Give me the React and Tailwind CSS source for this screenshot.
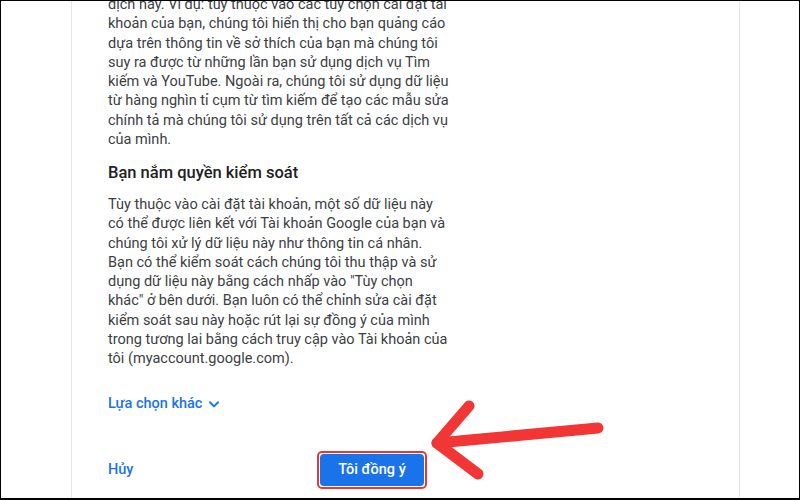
import React from 'react';

const para1 = [
  'dịch này. Ví dụ: tùy thuộc vào các tùy chọn cài đặt tài',
  'khoản của bạn, chúng tôi hiển thị cho bạn quảng cáo',
  'dựa trên thông tin về sở thích của bạn mà chúng tôi',
  'suy ra được từ những lần bạn sử dụng dịch vụ Tìm',
  'kiếm và YouTube. Ngoài ra, chúng tôi sử dụng dữ liệu',
  'từ hàng nghìn tỉ cụm từ tìm kiếm để tạo các mẫu sửa',
  'chính tả mà chúng tôi sử dụng trên tất cả các dịch vụ',
  'của mình.',
];

const para2 = [
  'Tùy thuộc vào cài đặt tài khoản, một số dữ liệu này',
  'có thể được liên kết với Tài khoản Google của bạn và',
  'chúng tôi xử lý dữ liệu này như thông tin cá nhân.',
  'Bạn có thể kiểm soát cách chúng tôi thu thập và sử',
  'dụng dữ liệu này bằng cách nhấp vào "Tùy chọn',
  'khác" ở bên dưới. Bạn luôn có thể chỉnh sửa cài đặt',
  'kiểm soát sau này hoặc rút lại sự đồng ý của mình',
  'trong tương lai bằng cách truy cập vào Tài khoản của',
  'tôi (myaccount.google.com).',
];

const App = () => {
  return (
    <div
      className="relative w-[800px] h-[500px] bg-white border border-b-2 border-black overflow-hidden flex"
      style={{ fontFamily: 'Roboto, "Liberation Sans", sans-serif' }}
    >
      <div className="w-[70px] shrink-0" />
      <div className="w-[669px] shrink-0 border-x border-[#e6e6e6] overflow-hidden pl-[36px] flex flex-col">
        <div className="-mt-[6px] text-[14.5px] leading-[19.25px] text-[#3c4043]">
          {para1.map((l) => (
            <div key={l} className="whitespace-nowrap">{l}</div>
          ))}
        </div>
        <h2 className="mt-[13px] text-[16.5px] leading-[22px] font-medium text-[#202124]">
          Bạn nắm quyền kiểm soát
        </h2>
        <div className="mt-[11px] text-[14.5px] leading-[19.25px] text-[#3c4043]">
          {para2.map((l) => (
            <div key={l} className="whitespace-nowrap">{l}</div>
          ))}
        </div>
        <button className="mt-[26px] self-start flex items-center gap-[5px] text-[14.5px] leading-[20px] font-medium text-[#1a73e8]">
          Lựa chọn khác
          <svg width="14" height="14" viewBox="0 0 24 24" fill="none" stroke="#1a73e8" strokeWidth="3.2" strokeLinecap="round" strokeLinejoin="round">
            <path d="M5 9l7 7 7-7" />
          </svg>
        </button>
        <div className="mt-[37px] flex items-center">
          <span className="text-[14.5px] font-medium text-[#1a73e8] w-[209px]">Hủy</span>
          <div className="rounded-[5px] border-2 border-[#e53935] p-[1px]">
            <button className="w-[104px] h-[32px] rounded-[4px] bg-[#1a73e8] text-white text-[14.5px] font-medium">
              Tôi đồng ý
            </button>
          </div>
        </div>
      </div>
      <div className="flex-1" />
      <svg className="absolute left-0 top-0 pointer-events-none" width="800" height="500">
        <g stroke="#f23535" strokeWidth="11" strokeLinecap="round" strokeLinejoin="round" fill="none">
          <path d="M597 427 L436 442" />
          <path d="M468 405 L436 442 L477 473" />
        </g>
      </svg>
    </div>
  );
};

export default App;
